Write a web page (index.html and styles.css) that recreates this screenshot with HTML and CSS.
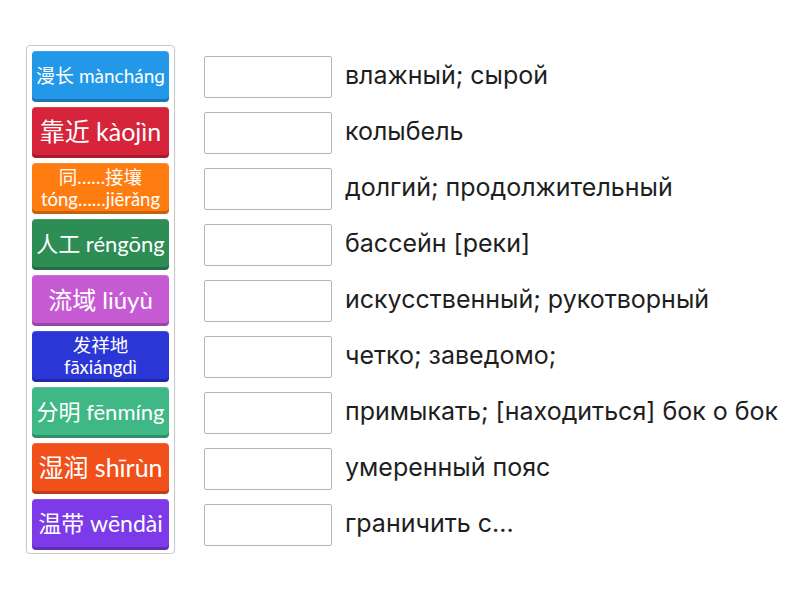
FILE: index.html
```html
<!DOCTYPE html>
<html lang="zh">
<head>
<meta charset="utf-8">
<link rel="stylesheet" href="styles.css">
</head>
<body>
<div class="page">
  <div class="panel">
    <div class="card c-blue fs19">漫长 mànchánɡ</div>
    <div class="card c-red fs25">靠近 kàojìn</div>
    <div class="card c-orange fs18">同……接壤<br>tóng……jiērǎng</div>
    <div class="card c-green fs22">人工 réngōng</div>
    <div class="card c-pink fs24">流域 liúyù</div>
    <div class="card c-royal fs18">发祥地<br>fāxiángdì</div>
    <div class="card c-mint fs22">分明 fēnmíng</div>
    <div class="card c-red2 fs25">湿润 shīrùn</div>
    <div class="card c-purple fs23">温带 wēndài</div>
  </div>
  <div class="targets">
    <div class="row"><div class="box"></div><span class="def">влажный; сырой</span></div>
    <div class="row"><div class="box"></div><span class="def">колыбель</span></div>
    <div class="row"><div class="box"></div><span class="def">долгий; продолжительный</span></div>
    <div class="row"><div class="box"></div><span class="def">бассейн [реки]</span></div>
    <div class="row"><div class="box"></div><span class="def">искусственный; рукотворный</span></div>
    <div class="row"><div class="box"></div><span class="def">четко; заведомо;</span></div>
    <div class="row"><div class="box"></div><span class="def">примыкать; [находиться] бок о бок</span></div>
    <div class="row"><div class="box"></div><span class="def">умеренный пояс</span></div>
    <div class="row"><div class="box"></div><span class="def">граничить с...</span></div>
  </div>
</div>
</body>
</html>
```

FILE: styles.css
```css
html, body {
  margin: 0;
  padding: 0;
  background: #ffffff;
}
.page {
  display: flex;
  align-items: flex-start;
  padding: 45px 0 0 26px;
}
.panel {
  display: flex;
  flex-direction: column;
  gap: 5px;
  padding: 5px 5px 3px 5px;
  border: 1px solid #c9c9c9;
  border-radius: 4px;
  box-shadow: 0 1px 2px rgba(0,0,0,0.08);
}
.card {
  width: 137px;
  height: 51px;
  box-sizing: border-box;
  border-radius: 4px;
  display: flex;
  align-items: center;
  justify-content: center;
  text-align: center;
  color: #ffffff;
  font-family: Lato, "Noto Sans CJK SC", sans-serif;
  line-height: 1.15;
  box-shadow: inset 0 -3px 0 rgba(0,0,0,0.22), inset 0 1px 0 rgba(255,255,255,0.12);
  padding-bottom: 2px;
  white-space: nowrap;
}
.fs18 { font-size: 18.5px; line-height: 22px; }
.fs19 { font-size: 19px; }
.fs22 { font-size: 22px; }
.fs23 { font-size: 23px; }
.fs24 { font-size: 24px; }
.fs25 { font-size: 25px; }
.c-blue   { background: #2398e8; }
.c-red    { background: #d6243a; }
.c-orange { background: #ff7d10; }
.c-green  { background: #2e8c55; }
.c-pink   { background: #c65ad3; }
.c-royal  { background: #2b36d6; }
.c-mint   { background: #3fb886; }
.c-red2   { background: #f2501b; }
.c-purple { background: #7c3ae8; }

.targets {
  display: flex;
  flex-direction: column;
  gap: 5px;
  margin-left: 29px;
  padding-top: 6px;
}
.row {
  height: 51px;
  display: flex;
  align-items: center;
}
.box {
  width: 128px;
  height: 42px;
  box-sizing: border-box;
  border: 1px solid #b5b5b5;
  border-radius: 2px;
  background: #ffffff;
  flex: none;
}
.def {
  margin-left: 13px;
  font-family: Inter, "Noto Sans", sans-serif;
  font-size: 25px;
  color: #1e1e1e;
  white-space: nowrap;
  margin-top: -4px;
}
```
